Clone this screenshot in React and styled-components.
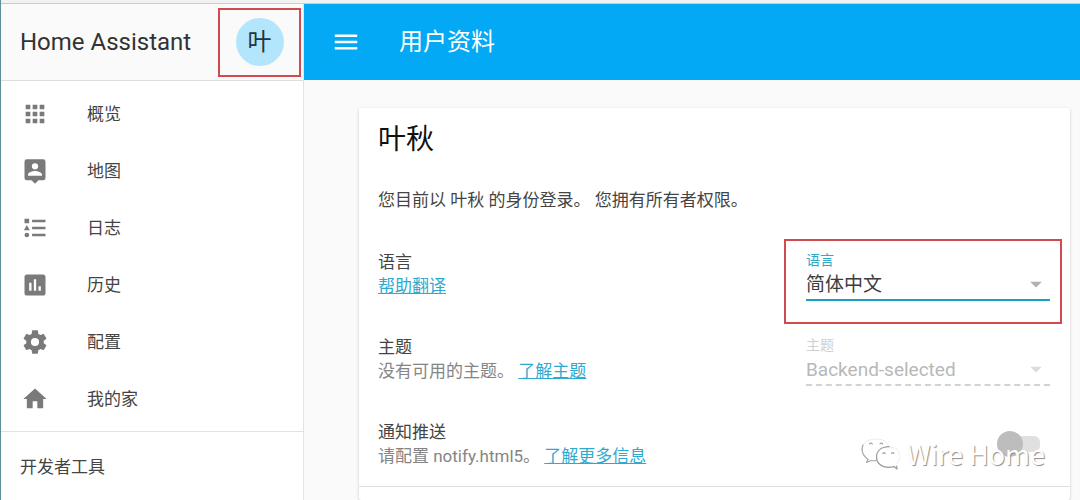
import React from "react";
import styled, { createGlobalStyle } from "styled-components";
import { MdApps, MdAssessment, MdHome, MdMenu, MdArrowDropDown } from "react-icons/md";

const GlobalStyle = createGlobalStyle`
  *, *::before, *::after { box-sizing: border-box; }
  body {
    margin: 0;
    overflow: hidden;
    background: #fafafa;
    color: #444;
    font-family: Roboto, "Noto Sans CJK SC", sans-serif;
    font-size: 17px;
    line-height: 24px;
  }
`;

const Page = styled.div`
  display: flex;
  flex-direction: column;
  height: 100vh;
  border-left: 1px solid #5f8f98;
`;

const TopStrip = styled.div`
  flex: none;
  height: 4px;
  background: #f2f2f2;
  border-bottom: 1px solid #c6cbcd;
`;

const Shell = styled.div`
  display: flex;
  flex: 1;
  min-height: 0;
`;

const Sidebar = styled.aside`
  flex: none;
  width: 303px;
  background: #fff;
  border-right: 1px solid #e3e3e3;
`;

const SidebarHeader = styled.header`
  display: flex;
  align-items: center;
  justify-content: space-between;
  height: 77px;
  padding: 0 2px 0 19px;
  background: #fafafa;
  border-bottom: 1px solid #dedede;
`;

const Brand = styled.h1`
  margin: 0;
  color: #333;
  font-size: 24px;
  font-weight: 400;
  line-height: 32px;
`;

const AvatarFrame = styled.div`
  display: grid;
  place-items: center;
  width: 83px;
  height: 69px;
  border: 2px solid #d04a50;
`;

const Avatar = styled.a`
  display: grid;
  place-items: center;
  width: 48px;
  height: 48px;
  border-radius: 50%;
  background: #b3e5fc;
  color: #24343c;
  font-size: 24px;
  text-decoration: none;
`;

const Nav = styled.nav`
  padding: 4px 0;
  border-bottom: 1px solid #e3e3e3;
`;

const NavItem = styled.a`
  display: flex;
  align-items: center;
  gap: 38px;
  height: 57px;
  padding: 0 20px;
  color: inherit;
  text-decoration: none;

  svg {
    width: 28px;
    height: 28px;
    fill: #7a7a7a;
  }
`;

const SectionTitle = styled.h2`
  margin: 0;
  padding: 23px 19px;
  font-size: 17px;
  font-weight: 400;
`;

const Main = styled.main`
  display: flex;
  flex: 1;
  flex-direction: column;
  min-width: 0;
`;

const Toolbar = styled.header`
  display: flex;
  flex: none;
  align-items: center;
  gap: 38px;
  height: 76px;
  padding: 0 27px;
  background: #03a9f4;
  color: #fff;
`;

const MenuButton = styled.button`
  display: grid;
  padding: 0;
  border: 0;
  background: none;
  color: inherit;

  svg {
    width: 30px;
    height: 30px;
  }
`;

const ToolbarTitle = styled.h2`
  margin: 0;
  font-size: 24px;
  font-weight: 400;
  line-height: 32px;
`;

const Content = styled.div`
  flex: 1;
  min-height: 0;
  padding: 28px 10px 0 55px;
`;

const Card = styled.section`
  min-height: 100%;
  background: #fff;
  border-radius: 2px;
  box-shadow: 0 1px 3px rgba(0, 0, 0, 0.22);
`;

const CardTitle = styled.h3`
  margin: 0;
  padding: 12px 19px 0;
  color: #111;
  font-size: 28px;
  font-weight: 400;
  line-height: 40px;
`;

const Intro = styled.p`
  margin: 0;
  padding: 28px 19px 19px;
`;

const Row = styled.div`
  position: relative;
  display: flex;
  align-items: center;
  justify-content: space-between;
  height: 85px;
  padding: 0 20px 0 19px;
`;

const RowTitle = styled.label`
  display: block;
`;

const RowNote = styled.div`
  color: #858585;
`;

const Link = styled.a`
  color: #2fa9d0;
  text-decoration: underline;
`;

const Field = styled.div`
  position: relative;
  width: 244px;
  padding-top: 6px;
  color: ${(p) => (p.$disabled ? "#b8b8b8" : "#3c3c3c")};
`;

const FieldLabel = styled.label`
  display: block;
  color: ${(p) => (p.$disabled ? "#d0d0d0" : "#2fa9c8")};
  font-size: 14px;
  line-height: 16px;
`;

const Select = styled.select`
  display: block;
  width: 100%;
  height: 33px;
  padding: 2px 0 0;
  appearance: none;
  border: 0;
  border-bottom: 2px ${(p) => (p.disabled ? "dashed #d2d2d2" : "solid #18a0c4")};
  border-radius: 0;
  outline: 0;
  background: none;
  color: inherit;
  font: inherit;
  font-size: 19px;
  opacity: 1;
`;

const Caret = styled(MdArrowDropDown)`
  position: absolute;
  right: 0;
  bottom: 3px;
  width: 28px;
  height: 28px;
  fill: ${(p) => (p.$disabled ? "#dcdcdc" : "#b0b0b0")};
  pointer-events: none;
`;

const FieldFrame = styled.div`
  position: absolute;
  inset: 8px 8px -8px auto;
  width: 278px;
  border: 2px solid #d04a50;
  pointer-events: none;
`;

const Toggle = styled.input`
  position: relative;
  width: 40px;
  height: 16px;
  margin: 0 10px 0 0;
  appearance: none;
  border-radius: 6px;
  background: #e0e0e0;

  &::before {
    content: "";
    position: absolute;
    top: -5px;
    left: -3px;
    width: 26px;
    height: 26px;
    border-radius: 50%;
    background: #bdbdbd;
  }
`;

const Divider = styled.hr`
  margin: 0;
  border: 0;
  border-top: 1px solid #e0e0e0;
`;

const Watermark = styled.div`
  position: absolute;
  right: 25px;
  bottom: 12px;
  display: flex;
  align-items: center;
  gap: 7px;
  color: #fff;
  font-family: "Noto Sans CJK SC", sans-serif;
  font-size: 27px;
  line-height: 40px;
  text-shadow: 1px 1px 1px #8c8c8c;
  pointer-events: none;

  svg {
    width: 40px;
    height: 32px;
  }
`;

const PinIcon = () => (
  <svg viewBox="0 0 24 24" aria-hidden="true">
    <path d="M19 2H5a2 2 0 0 0-2 2v14a2 2 0 0 0 2 2h4l3 3 3-3h4a2 2 0 0 0 2-2V4a2 2 0 0 0-2-2Zm-7 3.300a2.700 2.700 0 1 1 0 5.400 2.700 2.700 0 0 1 0-5.400ZM18 16H6v-.9c0-2 4-3.100 6-3.100s6 1.100 6 3.100V16Z" />
  </svg>
);

const GearIcon = () => (
  <svg viewBox="0 0 24 24" aria-hidden="true">
    <path d="M12,15.5A3.5,3.5 0 0,1 8.5,12A3.5,3.5 0 0,1 12,8.5A3.5,3.5 0 0,1 15.5,12A3.5,3.5 0 0,1 12,15.5M19.43,12.97C19.47,12.65 19.5,12.33 19.5,12C19.5,11.67 19.47,11.34 19.43,11L21.54,9.37C21.73,9.22 21.78,8.95 21.66,8.73L19.66,5.27C19.54,5.05 19.27,4.96 19.05,5.05L16.56,6.05C16.04,5.66 15.5,5.32 14.87,5.07L14.5,2.42C14.46,2.18 14.25,2 14,2H10C9.75,2 9.54,2.18 9.5,2.42L9.13,5.07C8.5,5.32 7.96,5.66 7.44,6.05L4.95,5.05C4.73,4.96 4.46,5.05 4.34,5.27L2.34,8.73C2.21,8.95 2.27,9.22 2.46,9.37L4.57,11C4.53,11.34 4.5,11.67 4.5,12C4.5,12.33 4.53,12.65 4.57,12.97L2.46,14.63C2.27,14.78 2.21,15.05 2.34,15.27L4.34,18.73C4.46,18.95 4.73,19.03 4.95,18.95L7.44,17.94C7.96,18.34 8.5,18.68 9.13,18.93L9.5,21.58C9.54,21.82 9.75,22 10,22H14C14.25,22 14.46,21.82 14.5,21.58L14.87,18.93C15.5,18.67 16.04,18.34 16.56,17.94L19.05,18.95C19.27,19.03 19.54,18.95 19.66,18.73L21.66,15.27C21.78,15.05 21.73,14.78 21.54,14.63L19.43,12.97Z" />
  </svg>
);

const ListIcon = () => (
  <svg viewBox="0 0 24 24" aria-hidden="true">
    <path d="M5,9.5L7.5,14H2.5L5,9.5M3,4H7V8H3V4M5,20A2,2 0 0,0 7,18A2,2 0 0,0 5,16A2,2 0 0,0 3,18A2,2 0 0,0 5,20M9.500,5V7H21V5H9.500M9.500,19H21V17H9.500V19M9.500,13H21V11H9.500V13Z" />
  </svg>
);

const ChatIcon = () => (
  <svg viewBox="0 0 40 32" fill="none" strokeLinecap="round" strokeLinejoin="round" aria-hidden="true">
    <path stroke="#ececec" d="M3 7C5 3 10 1 16 1c7 0 12 3 13 8M29 9c7 0 11 4 11 9 0 3-1 5-3 7" />
    <path stroke="#a6a6a6" strokeWidth="1.2" d="M3 7c-2 5-1 10 5 14.500L6.500 24.500 11 22.500c2 .5 3 .3 5 0" />
    <path
      stroke="#9c9c9c"
      strokeWidth="1.2"
      d="M29 8.700C21 9 16.500 13 16.500 19S21 29 28 29.300c2.500 0 4.500-.3 6.500-.6l2.500 2.300-.3-3"
    />
    <path
      stroke="#a6a6a6"
      strokeWidth="1.2"
      d="M9.500 6a1.500 1.500 0 0 1 2.800 0M20 6a1.500 1.500 0 0 1 2.800 0M22.800 15.500a1.300 1.300 0 0 1 2.400 0M31.500 15.500a1.300 1.300 0 0 1 2.400 0"
    />
  </svg>
);

const navItems = [
  { label: "概览", Icon: MdApps },
  { label: "地图", Icon: PinIcon },
  { label: "日志", Icon: ListIcon },
  { label: "历史", Icon: MdAssessment },
  { label: "配置", Icon: GearIcon },
  { label: "我的家", Icon: MdHome },
];

export default function App() {
  return (
    <Page>
      <GlobalStyle />
      <TopStrip />
      <Shell>
        <Sidebar>
          <SidebarHeader>
            <Brand>Home Assistant</Brand>
            <AvatarFrame>
              <Avatar href="#profile">叶</Avatar>
            </AvatarFrame>
          </SidebarHeader>
          <Nav>
            {navItems.map(({ label, Icon }) => (
              <NavItem href="#" key={label}>
                <Icon />
                {label}
              </NavItem>
            ))}
          </Nav>
          <SectionTitle>开发者工具</SectionTitle>
        </Sidebar>
        <Main>
          <Toolbar>
            <MenuButton type="button" aria-label="菜单">
              <MdMenu />
            </MenuButton>
            <ToolbarTitle>用户资料</ToolbarTitle>
          </Toolbar>
          <Content>
            <Card>
              <CardTitle>叶秋</CardTitle>
              <Intro>您目前以 叶秋 的身份登录。 您拥有所有者权限。</Intro>
              <Row>
                <div>
                  <RowTitle htmlFor="language">语言</RowTitle>
                  <RowNote>
                    <Link href="#translate">帮助翻译</Link>
                  </RowNote>
                </div>
                <Field>
                  <FieldLabel htmlFor="language">语言</FieldLabel>
                  <Select id="language">
                    <option>简体中文</option>
                  </Select>
                  <Caret />
                </Field>
                <FieldFrame />
              </Row>
              <Row>
                <div>
                  <RowTitle htmlFor="theme">主题</RowTitle>
                  <RowNote>
                    没有可用的主题。 <Link href="#themes">了解主题</Link>
                  </RowNote>
                </div>
                <Field $disabled>
                  <FieldLabel htmlFor="theme" $disabled>主题</FieldLabel>
                  <Select id="theme" disabled>
                    <option>Backend-selected</option>
                  </Select>
                  <Caret $disabled />
                </Field>
              </Row>
              <Row>
                <div>
                  <RowTitle htmlFor="push">通知推送</RowTitle>
                  <RowNote>
                    请配置 notify.html5。 <Link href="#push">了解更多信息</Link>
                  </RowNote>
                </div>
                <Toggle id="push" type="checkbox" disabled />
                <Watermark>
                  <ChatIcon />
                  Wire Home
                </Watermark>
              </Row>
              <Divider />
            </Card>
          </Content>
        </Main>
      </Shell>
    </Page>
  );
}
